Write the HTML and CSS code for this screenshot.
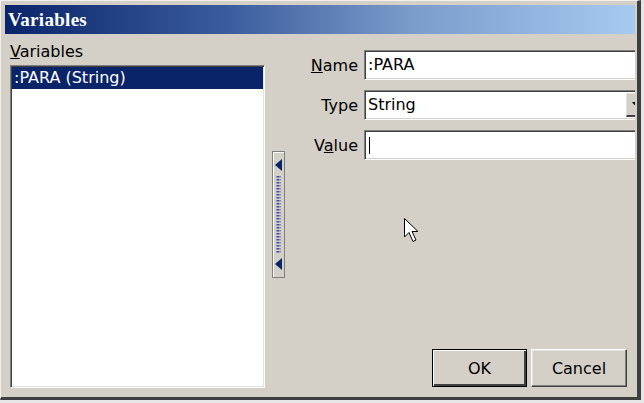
FILE: index.html
```html
<!DOCTYPE html>
<html>
<head>
<meta charset="utf-8">
<link rel="stylesheet" href="styles.css">
</head>
<body>
<div class="window">
  <div class="titlebar">Variables</div>
  <div class="main">
    <div class="left">
      <div class="label"><u>V</u>ariables</div>
      <div class="listbox">
        <div class="item selected">:PARA (String)</div>
      </div>
    </div>
    <div class="splitter">
      <svg width="9" height="125" viewBox="0 0 9 125">
        <defs>
          <pattern id="dots" width="4" height="3" patternUnits="userSpaceOnUse">
            <rect x="0" y="0" width="1.5" height="1.5" fill="#3c46b4"/>
            <rect x="2.5" y="0" width="1.5" height="1.5" fill="#3c46b4"/>
          </pattern>
        </defs>
        <polygon points="1,13 8,7 8,19" fill="#0a246a"/>
        <rect x="2" y="24" width="5" height="78" fill="url(#dots)"/>
        <polygon points="1,112 8,106 8,118" fill="#0a246a"/>
      </svg>
    </div>
    <div class="right">
      <div class="form">
        <div class="flabel"><u>N</u>ame</div>
        <div class="field">:PARA</div>
        <div class="flabel">Type</div>
        <div class="field combo">String<span class="dropbtn"><svg width="8" height="5" viewBox="0 0 8 5"><polygon points="0,0 7,0 3.5,4" fill="#000"/></svg></span></div>
        <div class="flabel">V<u>a</u>lue</div>
        <div class="field"><span class="caret"></span></div>
      </div>
      <div class="buttons">
        <div class="btn default"><span>OK</span></div>
        <div class="btn"><span>Cancel</span></div>
      </div>
    </div>
  </div>
</div>
<svg class="cursor" width="16" height="28" viewBox="0 0 16 28">
  <path d="M1.5,1.5 L1.5,20 L6,15.5 L10,24.5 L13,23 L9,14.5 L15,14.5 Z" fill="#fff" stroke="#000" stroke-width="1" stroke-linejoin="miter"/>
</svg>
</body>
</html>
```

FILE: styles.css
```css
html, body {
  margin: 0;
  padding: 0;
}
body {
  width: 644px;
  height: 403px;
  background: #e6e6e6;
  position: relative;
  overflow: hidden;
  font-family: "DejaVu Sans", Tahoma, sans-serif;
  font-size: 16px;
  color: #000;
}
.window {
  box-sizing: border-box;
  width: 641px;
  height: 400px;
  background: #d4d0c8;
  border-top: 1px solid #f2f1ee;
  border-left: 1px solid #f2f1ee;
  border-right: 4px solid #3e3e3e;
  border-bottom: 3px solid #3e3e3e;
  padding: 4px 2px 0 4px;
  display: flex;
  flex-direction: column;
}
.titlebar {
  height: 29px;
  line-height: 30px;
  padding-left: 3px;
  color: #fff;
  font-family: "Liberation Serif", "DejaVu Serif", serif;
  font-weight: bold;
  font-size: 19px;
  letter-spacing: 0.3px;
  background: linear-gradient(to right, #0a246a 0%, #3a5c9c 35%, #7c9ccc 65%, #a6caf0 100%);
  flex: none;
}
.main {
  flex: 1;
  display: flex;
  min-height: 0;
}
.left {
  margin-left: 5px;
  width: 255px;
  display: flex;
  flex-direction: column;
}
.label {
  margin-top: 8px;
  height: 19px;
  line-height: 19px;
}
.listbox {
  margin-top: 4px;
  height: 323px;
  box-sizing: border-box;
  background: #fff;
  border: 1px solid;
  border-color: #808080 #ffffff #ffffff #808080;
  box-shadow: inset 1px 1px 0 #404040, inset -1px -1px 0 #e4e2dc;
  padding: 1px;
}
.item {
  height: 22px;
  line-height: 22px;
  padding-left: 2px;
}
.item.selected {
  background: #0a246a;
  color: #fff;
}
.splitter {
  margin-left: 7px;
  margin-top: 117px;
  width: 13px;
  height: 127px;
  box-sizing: border-box;
  border: 1px solid #808080;
  box-shadow: inset 1px 1px 0 #ffffff;
  background: #d4d0c8;
  display: flex;
  justify-content: center;
}
.right {
  flex: 1;
  overflow: hidden;
  display: flex;
  flex-direction: column;
}
.form {
  margin-top: 16px;
  width: calc(100% + 12px);
  display: grid;
  grid-template-columns: 73px 1fr;
  column-gap: 6px;
  row-gap: 10px;
  grid-auto-rows: 30px;
  align-items: center;
}
.flabel {
  text-align: right;
}
.field {
  height: 30px;
  box-sizing: border-box;
  background: #fff;
  border: 1px solid;
  border-color: #808080 #ffffff #ffffff #808080;
  box-shadow: inset 1px 1px 0 #404040, inset -1px -1px 0 #d4d0c8;
  padding: 0 3px;
  line-height: 28px;
  position: relative;
  display: flex;
  align-items: center;
}
.combo .dropbtn {
  position: absolute;
  right: 2px;
  top: 2px;
  bottom: 2px;
  width: 18px;
  box-sizing: border-box;
  background: #d4d0c8;
  border-top: 1px solid #e4e2dc;
  border-left: 1px solid #e4e2dc;
  border-bottom: 2px solid #404040;
  display: flex;
  align-items: center;
  padding-left: 5px;
}
.caret {
  display: block;
  width: 1px;
  height: 17px;
  background: #000;
  margin-left: 1px;
}
.buttons {
  margin-top: auto;
  margin-bottom: 10px;
  margin-right: 8px;
  display: flex;
  justify-content: flex-end;
  gap: 4px;
}
.btn {
  width: 96px;
  height: 38px;
  box-sizing: border-box;
  border: 1px solid;
  border-color: #ffffff #404040 #404040 #ffffff;
  box-shadow: inset -1px -1px 0 #808080, inset 1px 1px 0 #e4e2dc;
  display: flex;
  align-items: center;
  justify-content: center;
}
.btn.default {
  width: 95px;
  border-color: #000;
  box-shadow: inset 1px 1px 0 #ffffff, inset -2px -2px 0 #404040;
}
.cursor {
  position: absolute;
  left: 403px;
  top: 217px;
}
```
